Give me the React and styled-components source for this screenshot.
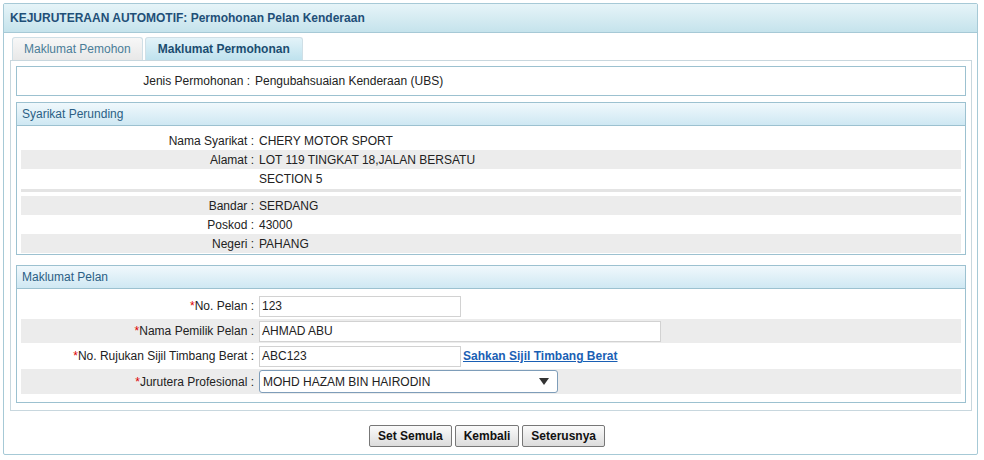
import styled, { createGlobalStyle } from "styled-components";

const Global = createGlobalStyle`
  body { margin: 0; background: #fff; font-family: Arial, "Liberation Sans", sans-serif; font-size: 12px; color: #222; }
`;

const Outer = styled.div`
  margin: 3px 4px 0 3px;
  width: 975px;
  height: 452px;
  border: 1px solid #a6c9d6;
  box-sizing: border-box;
  border-radius: 2px;
`;

const Header = styled.div`
  height: 28px;
  line-height: 28px;
  padding-left: 6px;
  background: linear-gradient(#e6f4f8, #c5e3ec);
  border-bottom: 1px solid #a6c9d6;
  color: #1f4f78;
  font-weight: bold;
`;

const Body = styled.div`
  padding: 4px 5px 0 6px;
`;

const Tabs = styled.div`
  display: flex;
  gap: 2px;
  margin-left: 2px;
`;

const Tab = styled.div`
  height: 22px;
  line-height: 22px;
  padding: 0 ${p => (p.$active ? "12px" : "11px")};
  border: 1px solid #cfdfe6;
  border-bottom: none;
  border-radius: 3px 3px 0 0;
  background: ${p => (p.$active ? "linear-gradient(#e3f3f9, #bfe2ee)" : "linear-gradient(#f7f7f7, #e8e8e8)")};
  color: ${p => (p.$active ? "#1b4d70" : "#4a7d98")};
  font-weight: ${p => (p.$active ? "bold" : "normal")};
`;

const Panel = styled.div`
  border: 1px solid #c8d7de;
  height: 344px;
  padding: 5px 5px 0 5px;
  display: flex;
  flex-direction: column;
  gap: 6px;
`;

const Box = styled.div`
  border: 1px solid #9cc1d0;
  margin-top: ${p => p.$mt || 0}px;
`;

const SectionHead = styled.div`
  height: 22px;
  line-height: 22px;
  padding-left: 5px;
  background: linear-gradient(#f0f8fc, #cfe8f3);
  border-bottom: 1px solid #9cc1d0;
  color: #2b5f85;
`;

const Rows = styled.div`
  padding: ${p => p.$pad || "5px 4px"};
`;

const Row = styled.div`
  display: grid;
  grid-template-columns: 238px 1fr;
  align-items: center;
  height: ${p => p.$h || 19}px;
  margin-bottom: ${p => p.$mb || 0}px;
  background: ${p => (p.$grey ? "#ececec" : "transparent")};
`;

const Label = styled.div`
  text-align: right;
  padding-right: 5px;
  white-space: nowrap;
`;

const Star = styled.span`
  color: #d00;
`;

const Divider = styled.div`
  height: 3px;
  background: #e4e4e4;
  margin: 1px 0 4px;
`;

const Input = styled.div`
  width: ${p => p.$w}px;
  height: 21px;
  box-sizing: border-box;
  border: 1px solid #d2d2d2;
  line-height: 19px;
  padding-left: 2px;
  background: #fff;
`;

const Cell = styled.div`
  display: flex;
  align-items: center;
  gap: 2px;
`;

const Link = styled.a`
  color: #1a5fb4;
  font-weight: bold;
  text-decoration: underline;
`;

const Select = styled.div`
  width: 299px;
  height: 23px;
  box-sizing: border-box;
  border: 1px solid #7e9db9;
  border-radius: 3px;
  padding: 0 8px 0 3px;
  display: flex;
  align-items: center;
  justify-content: space-between;
  background: #fff;
`;

const Buttons = styled.div`
  display: flex;
  justify-content: center;
  gap: 3px;
  margin-top: 14px;
  padding-right: 8px;
`;

const Button = styled.button`
  height: 22px;
  padding: 0 8px;
  font: bold 12px Arial, "Liberation Sans", sans-serif;
  color: #111;
  border: 1px solid #777;
  border-radius: 2px;
  background: linear-gradient(#fafafa, #dcdcdc);
`;

export default function App() {
  return (
    <>
      <Global />
      <Outer>
        <Header>KEJURUTERAAN AUTOMOTIF: Permohonan Pelan Kenderaan</Header>
        <Body>
          <Tabs>
            <Tab>Maklumat Pemohon</Tab>
            <Tab $active>Maklumat Permohonan</Tab>
          </Tabs>
          <Panel>
            <Box>
              <Row $h={28}>
                <Label>Jenis Permohonan :</Label>
                <div>Pengubahsuaian Kenderaan (UBS)</div>
              </Row>
            </Box>
            <Box>
              <SectionHead>Syarikat Perunding</SectionHead>
              <Rows $pad="5px 4px 1px">
                <Row><Label>Nama Syarikat :</Label><div>CHERY MOTOR SPORT</div></Row>
                <Row $grey><Label>Alamat :</Label><div>LOT 119 TINGKAT 18,JALAN BERSATU</div></Row>
                <Row><Label></Label><div>SECTION 5</div></Row>
                <Divider />
                <Row $grey><Label>Bandar :</Label><div>SERDANG</div></Row>
                <Row><Label>Poskod :</Label><div>43000</div></Row>
                <Row $grey><Label>Negeri :</Label><div>PAHANG</div></Row>
              </Rows>
            </Box>
            <Box $mt={4}>
              <SectionHead>Maklumat Pelan</SectionHead>
              <Rows $pad="5px 4px 8px">
                <Row $h={24} $mb={1}>
                  <Label><Star>*</Star>No. Pelan :</Label>
                  <Input $w={202}>123</Input>
                </Row>
                <Row $h={24} $mb={1} $grey>
                  <Label><Star>*</Star>Nama Pemilik Pelan :</Label>
                  <Input $w={402}>AHMAD ABU</Input>
                </Row>
                <Row $h={24} $mb={1}>
                  <Label><Star>*</Star>No. Rujukan Sijil Timbang Berat :</Label>
                  <Cell>
                    <Input $w={202}>ABC123</Input>
                    <Link>Sahkan Sijil Timbang Berat</Link>
                  </Cell>
                </Row>
                <Row $h={25} $grey>
                  <Label><Star>*</Star>Jurutera Profesional :</Label>
                  <Select>
                    <span>MOHD HAZAM BIN HAIRODIN</span>
                    <svg width="10" height="7" viewBox="0 0 10 7"><path d="M0 0h10L5 7z" fill="#333" /></svg>
                  </Select>
                </Row>
              </Rows>
            </Box>
          </Panel>
          <Buttons>
            <Button>Set Semula</Button>
            <Button>Kembali</Button>
            <Button>Seterusnya</Button>
          </Buttons>
        </Body>
      </Outer>
    </>
  );
}
